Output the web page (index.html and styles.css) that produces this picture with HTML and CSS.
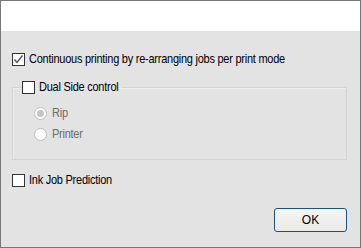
FILE: index.html
```html
<!DOCTYPE html>
<html lang="en">
<head>
    <meta charset="UTF-8">
    <title>Print Options</title>
    <link rel="stylesheet" href="styles.css">
</head>
<body>
    <div class="window">
        <div class="header"></div>
        <div class="content">
            <label class="check-row">
                <span class="box checked">
                    <svg width="11" height="11" viewBox="0 0 11 11"><path d="M1.5 5.5 L4 8.5 L9.5 1.5" fill="none" stroke="#555" stroke-width="1.4"/></svg>
                </span>
                <span class="text">Continuous printing by re-arranging jobs per print mode</span>
            </label>

            <fieldset class="group">
                <legend class="check-row">
                    <span class="box"></span>
                    <span class="text">Dual Side control</span>
                </legend>
                <div class="radio-row">
                    <span class="radio on"></span>
                    <span class="text">Rip</span>
                </div>
                <div class="radio-row">
                    <span class="radio"></span>
                    <span class="text">Printer</span>
                </div>
            </fieldset>

            <label class="check-row ink">
                <span class="box"></span>
                <span class="text">Ink Job Prediction</span>
            </label>

            <div class="buttons">
                <button type="button" class="btn">OK</button>
            </div>
        </div>
    </div>
</body>
</html>
```

FILE: styles.css
```css
body {
  margin: 0;
  padding: 0;
  font-family: "Liberation Sans", Arial, sans-serif;
  font-size: 11px;
  color: #000;
}

.window {
  width: 361px;
  height: 248px;
  box-sizing: border-box;
  border: 1px solid #777777;
  background-color: #e3e3e3;
  display: flex;
  flex-direction: column;
}

.header {
  height: 30px;
  background-color: #ffffff;
}

.content {
  flex: 1;
  padding: 22px 13px 0 11px;
  display: flex;
  flex-direction: column;
}

.check-row {
  display: flex;
  align-items: center;
  height: 13px;
  gap: 4px;
}

.text {
  line-height: 13px;
  letter-spacing: -0.25px;
  transform: scaleY(1.12);
}

.box {
  width: 13px;
  height: 13px;
  box-sizing: border-box;
  border: 1px solid #333333;
  background-color: #ffffff;
  display: flex;
  align-items: center;
  justify-content: center;
}

.group {
  margin: 15px 0 0 0;
  padding: 0 0 18px 0;
  border: 1px solid #d4d4d4;
  box-shadow: inset 1px 1px 0 #ececec;
}

.group legend {
  margin-left: 9px;
  padding: 0 3px 0 0;
}

.radio-row {
  display: flex;
  align-items: center;
  height: 13px;
  gap: 5px;
  margin-left: 21px;
  margin-top: 13px;
  color: #6d6d6d;
}

.radio-row + .radio-row {
  margin-top: 8px;
}

.radio {
  width: 13px;
  height: 13px;
  box-sizing: border-box;
  border-radius: 50%;
  border: 1px solid #bcbcbc;
  background-color: #ffffff;
  position: relative;
}

.radio.on::after {
  content: "";
  position: absolute;
  left: 2px;
  top: 2px;
  width: 7px;
  height: 7px;
  border-radius: 50%;
  background-color: #c4c4c4;
}

.ink {
  margin-top: 14px;
}

.buttons {
  display: flex;
  justify-content: flex-end;
  margin-top: 21px;
}

.btn {
  width: 73px;
  height: 24px;
  border: 1px solid #1d4f7f;
  border-radius: 3px;
  background: linear-gradient(#f5f5f3, #e9e9e6);
  font-family: "Liberation Sans", Arial, sans-serif;
  font-size: 12px;
  color: #000;
  padding: 0;
}
```
